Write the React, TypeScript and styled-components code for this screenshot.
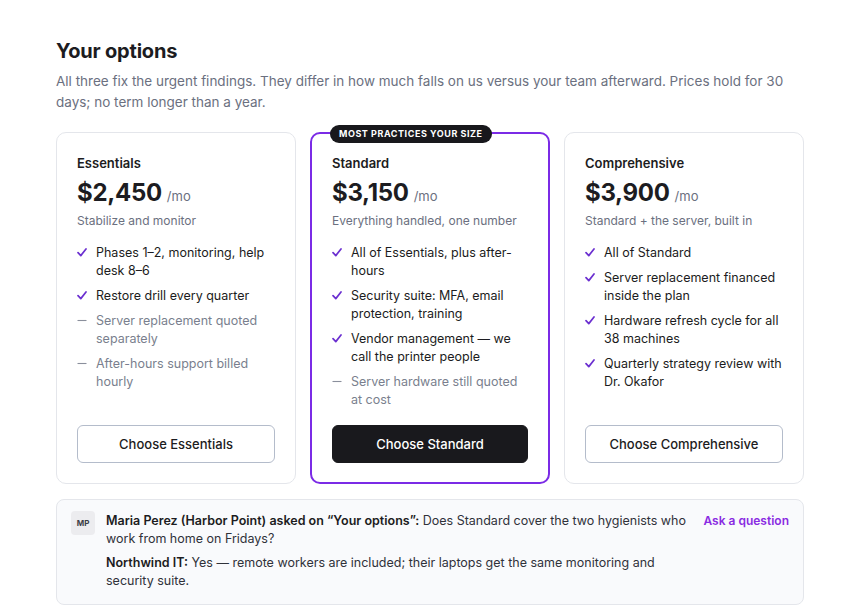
import React from 'react';
import styled, { createGlobalStyle } from 'styled-components';

const GlobalStyle = createGlobalStyle`
  * { box-sizing: border-box; }
  body {
    margin: 0;
    background: #ffffff;
    font-family: Inter, 'Noto Sans', sans-serif;
    color: #1c1c21;
  }
`;

const Page = styled.main`
  padding: 38px 56px 0 56px;
  width: 860px;
`;

const Title = styled.h2`
  margin: 0;
  font-size: 20px;
  font-weight: 700;
  letter-spacing: -0.2px;
  line-height: 26px;
  color: #1c1c21;
`;

const Lead = styled.p`
  margin: 7px 0 0 0;
  font-size: 13.5px;
  line-height: 21px;
  color: #6b7080;
`;

const Plans = styled.div`
  display: grid;
  grid-template-columns: repeat(3, 1fr);
  gap: 14px;
  margin-top: 19px;
`;

const Card = styled.section<{ $featured?: boolean }>`
  position: relative;
  display: flex;
  flex-direction: column;
  height: 352px;
  border: ${(p) => (p.$featured ? '2px solid #7b2be6' : '1px solid #e4e6eb')};
  border-radius: 10px;
  padding: ${(p) => (p.$featured ? '20px 20px 19px 20px' : '21px 20px 20px 20px')};
  background: #fff;
`;

const Badge = styled.span`
  position: absolute;
  top: -9px;
  left: 18px;
  background: #18181c;
  color: #fff;
  font-size: 9px;
  font-weight: 700;
  letter-spacing: 0.55px;
  text-transform: uppercase;
  padding: 3px 9px;
  border-radius: 9px;
  white-space: nowrap;
  line-height: 12px;
`;

const PlanName = styled.h3`
  margin: 0;
  font-size: 13px;
  font-weight: 600;
  line-height: 18px;
`;

const PriceRow = styled.div`
  display: flex;
  align-items: baseline;
  gap: 5px;
  margin-top: 6px;
`;

const Price = styled.span`
  font-size: 24px;
  font-weight: 700;
  line-height: 30px;
  letter-spacing: -0.3px;
`;

const Per = styled.span`
  font-size: 13px;
  color: #6b7080;
`;

const Tagline = styled.div`
  margin-top: 4px;
  font-size: 12px;
  line-height: 18px;
  color: #6b7080;
`;

const Features = styled.ul`
  list-style: none;
  margin: 14px 0 0 0;
  padding: 0;
  display: flex;
  flex-direction: column;
  gap: 7px;
`;

const Feature = styled.li<{ $included: boolean }>`
  display: flex;
  gap: 9px;
  font-size: 12.5px;
  line-height: 18px;
  color: ${(p) => (p.$included ? '#1c1c21' : '#7a7f8e')};
`;

const Mark = styled.span`
  flex: 0 0 10px;
  display: flex;
  justify-content: center;
  padding-top: 4px;
`;

const Button = styled.button<{ $primary?: boolean }>`
  margin-top: auto;
  height: 38px;
  width: 100%;
  border-radius: 6px;
  border: ${(p) => (p.$primary ? '1px solid #19191d' : '1px solid #b4bccb')};
  background: ${(p) => (p.$primary ? '#19191d' : '#fff')};
  color: ${(p) => (p.$primary ? '#fff' : '#1c1c21')};
  font-family: inherit;
  font-size: 13px;
  font-weight: 500;
  cursor: pointer;
`;

const Thread = styled.aside`
  margin-top: 15px;
  display: flex;
  gap: 11px;
  background: #f9fafc;
  border: 1px solid #e4e6eb;
  border-radius: 8px;
  padding: 11px 14px 14px 14px;
`;

const Avatar = styled.div`
  flex: 0 0 24px;
  height: 24px;
  border-radius: 4px;
  background: #ececef;
  display: flex;
  align-items: center;
  justify-content: center;
  font-size: 8px;
  font-weight: 700;
  color: #3b3d45;
`;

const Messages = styled.div`
  flex: 1;
  display: flex;
  flex-direction: column;
  gap: 6px;
  padding-top: 1px;
`;

const Message = styled.p`
  margin: 0;
  font-size: 12.5px;
  line-height: 18px;
  color: #30323a;
  strong { font-weight: 600; color: #1c1c21; }
`;

const AskLink = styled.a`
  flex: 0 0 auto;
  font-size: 12px;
  font-weight: 600;
  line-height: 18px;
  color: #8a2be2;
  text-decoration: none;
  padding-top: 1px;
`;

const Check = () => (
  <svg width="10" height="9" viewBox="0 0 10 9" fill="none">
    <path d="M1 4.6 L3.8 7.6 L9 1" stroke="#6b2fd0" strokeWidth="1.7" strokeLinecap="round" strokeLinejoin="round" />
  </svg>
);

const Dash = () => (
  <svg width="10" height="9" viewBox="0 0 10 9">
    <line x1="0.5" y1="4.5" x2="9.5" y2="4.5" stroke="#8a8f9c" strokeWidth="1.1" />
  </svg>
);

type Plan = {
  name: string;
  price: string;
  tagline: string;
  features: [string, boolean][];
  featured?: boolean;
};

const plans: Plan[] = [
  {
    name: 'Essentials',
    price: '$2,450',
    tagline: 'Stabilize and monitor',
    features: [
      ['Phases 1–2, monitoring, help desk 8–6', true],
      ['Restore drill every quarter', true],
      ['Server replacement quoted separately', false],
      ['After-hours support billed hourly', false],
    ],
  },
  {
    name: 'Standard',
    price: '$3,150',
    tagline: 'Everything handled, one number',
    featured: true,
    features: [
      ['All of Essentials, plus after-hours', true],
      ['Security suite: MFA, email protection, training', true],
      ['Vendor management — we call the printer people', true],
      ['Server hardware still quoted at cost', false],
    ],
  },
  {
    name: 'Comprehensive',
    price: '$3,900',
    tagline: 'Standard + the server, built in',
    features: [
      ['All of Standard', true],
      ['Server replacement financed inside the plan', true],
      ['Hardware refresh cycle for all 38 machines', true],
      ['Quarterly strategy review with Dr. Okafor', true],
    ],
  },
];

export default function App() {
  return (
    <>
      <GlobalStyle />
      <Page>
        <Title>Your options</Title>
        <Lead>
          All three fix the urgent findings. They differ in how much falls on us versus your team afterward. Prices hold
          for 30 days; no term longer than a year.
        </Lead>
        <Plans>
          {plans.map((plan) => (
            <Card key={plan.name} $featured={plan.featured}>
              {plan.featured && <Badge>Most practices your size</Badge>}
              <PlanName>{plan.name}</PlanName>
              <PriceRow>
                <Price>{plan.price}</Price>
                <Per>/mo</Per>
              </PriceRow>
              <Tagline>{plan.tagline}</Tagline>
              <Features>
                {plan.features.map(([text, included]) => (
                  <Feature key={text} $included={included}>
                    <Mark>{included ? <Check /> : <Dash />}</Mark>
                    <span>{text}</span>
                  </Feature>
                ))}
              </Features>
              <Button $primary={plan.featured}>Choose {plan.name}</Button>
            </Card>
          ))}
        </Plans>
        <Thread>
          <Avatar>MP</Avatar>
          <Messages>
            <Message>
              <strong>Maria Perez (Harbor Point) asked on “Your options”:</strong> Does Standard cover the two hygienists
              who work from home on Fridays?
            </Message>
            <Message>
              <strong>Northwind IT:</strong> Yes — remote workers are included; their laptops get the same monitoring and
              security suite.
            </Message>
          </Messages>
          <AskLink href="#">Ask a question</AskLink>
        </Thread>
      </Page>
    </>
  );
}
